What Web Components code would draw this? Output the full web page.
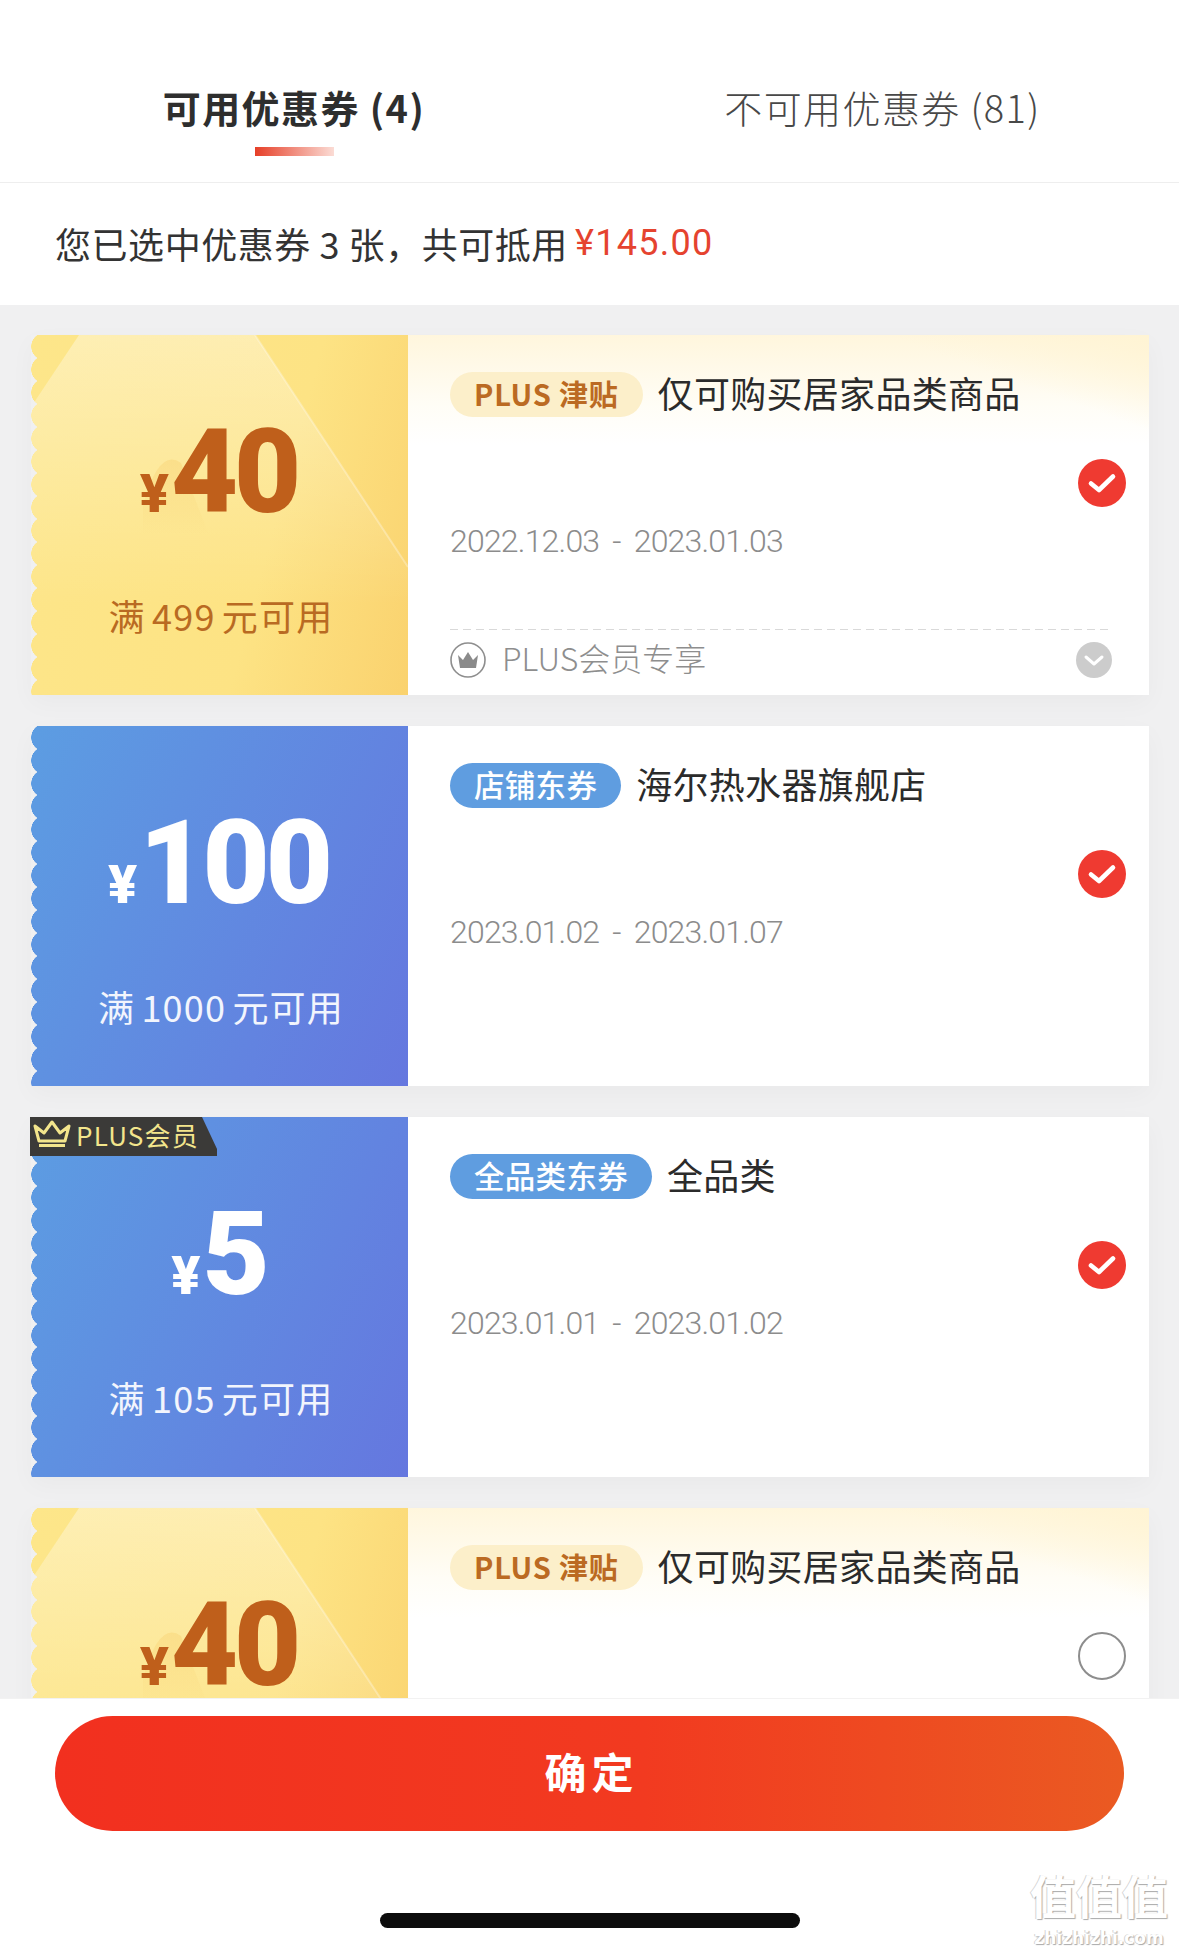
<!DOCTYPE html>
<html lang="zh">
<head>
<meta charset="utf-8">
<title>优惠券</title>
<style>
  html, body { margin: 0; padding: 0; background: #fff; }
  body { font-family: "Noto Sans CJK SC", "Noto Sans", sans-serif; overflow: hidden; }
</style>
</head>
<body>
<coupon-page>
  <coupon-tabs slot="head" active="可用优惠券 (4)" other="不可用优惠券 (81)"></coupon-tabs>
  <coupon-summary slot="head" price="¥145.00">您已选中优惠券 3 张&#xFF0C;共可抵用</coupon-summary>

  <coupon-card theme="gold" amount="40" rule="满 499 元可用" tag="PLUS 津贴" date="2022.12.03 - 2023.01.03" checked foot="PLUS会员专享">仅可购买居家品类商品</coupon-card>
  <coupon-card theme="blue" amount="100" rule="满 1000 元可用" tag="店铺东券" date="2023.01.02 - 2023.01.07" checked>海尔热水器旗舰店</coupon-card>
  <coupon-card theme="blue" amount="5" rule="满 105 元可用" tag="全品类东券" date="2023.01.01 - 2023.01.02" checked plus>全品类</coupon-card>
  <coupon-card theme="gold" amount="40" rule="满 499 元可用" tag="PLUS 津贴" date="2022.12.03 - 2023.01.03" foot="PLUS会员专享">仅可购买居家品类商品</coupon-card>

  <coupon-footer slot="foot">确定</coupon-footer>
</coupon-page>

<script>
class CouponPage extends HTMLElement {
  constructor() {
    super();
    this.attachShadow({ mode: "open" }).innerHTML = `
      <style>
        :host { display: flex; flex-direction: column; width: 1179px; height: 1952px; background: #fff; position: relative; overflow: hidden; }
        .list { flex: 1; min-height: 0; overflow: hidden; background: #f0f0f1; padding: 30px 30px 0 31px; display: flex; flex-direction: column; gap: 31px; }
      </style>
      <slot name="head"></slot>
      <div class="list"><slot></slot></div>
      <slot name="foot"></slot>
    `;
  }
}

class CouponTabs extends HTMLElement {
  connectedCallback() {
    this.attachShadow({ mode: "open" }).innerHTML = `
      <style>
        :host { display: grid; grid-template-columns: 590px 589px; height: 182px; border-bottom: 1px solid #eeeeee; color: #333; }
        .tab { display: flex; flex-direction: column; align-items: center; padding-top: 81px; font-size: 38px; line-height: 52px; letter-spacing: 1.4px; white-space: nowrap; }
        .on { font-weight: 700; color: #2e2e2e; transform: translateX(-1px); }
        .off { color: #484848; font-weight: 300; transform: translateX(-2px); }
        .bar { width: 79px; height: 9px; margin-top: 14px; background: linear-gradient(90deg, #e63f28, #fbdcd5); }
      </style>
      <div class="tab on"><span>${this.getAttribute("active")}</span><div class="bar"></div></div>
      <div class="tab off"><span>${this.getAttribute("other")}</span></div>
    `;
  }
}

class CouponSummary extends HTMLElement {
  connectedCallback() {
    this.attachShadow({ mode: "open" }).innerHTML = `
      <style>
        :host { display: flex; align-items: center; gap: 7px; height: 122px; padding: 0 0 2px 55px; box-sizing: border-box; font-size: 36px; letter-spacing: .55px; color: #333; background: #fff; }
        .price { color: #e5432f; font-family: Roboto, sans-serif; letter-spacing: 1.3px; }
      </style>
      <span><slot></slot></span><span class="price">${this.getAttribute("price")}</span>
    `;
  }
}

class CouponCard extends HTMLElement {
  connectedCallback() {
    const gold = this.getAttribute("theme") === "gold";
    const foot = this.getAttribute("foot");

    // the light wedge and the faint peak behind the amount on gold tickets
    const rays = gold ? `
      <svg class="rays" viewBox="0 0 377 360" preserveAspectRatio="none">
        <defs>
          <linearGradient id="g" x1="0" y1="0" x2="0" y2="1">
            <stop offset="0" stop-color="#fff" stop-opacity=".36"/>
            <stop offset=".75" stop-color="#fff" stop-opacity="0"/>
          </linearGradient>
          <linearGradient id="p" x1="0" y1="0" x2="0" y2="1">
            <stop offset="0" stop-color="#f7cf6e" stop-opacity=".4"/>
            <stop offset="1" stop-color="#f7cf6e" stop-opacity="0"/>
          </linearGradient>
        </defs>
        <polygon points="48,0 224,0 377,232 377,360 0,360 0,72" fill="url(#g)"/>
        <path d="M224 0 L377 232" stroke="#fff" stroke-opacity=".3" stroke-width="2" fill="none"/>
        <path d="M112 170 Q128 112 150 128 L178 200 L112 200 Z" fill="url(#p)"/>
      </svg>` : "";

    const plus = this.hasAttribute("plus") ? `
      <div class="plus">
        <svg width="38" height="28" viewBox="0 0 38 28" fill="none" stroke="#f3e58c" stroke-width="3" stroke-linejoin="round">
          <path d="M2 6 L11 13 L19 2 L27 13 L36 6 L32 21 H6 Z"/><path d="M6 25.5 H32"/>
        </svg>
        <span>PLUS会员</span>
      </div>` : "";

    const footer = foot ? `
      <div class="foot">
        <svg width="36" height="36" viewBox="0 0 36 36">
          <circle cx="18" cy="18" r="17" fill="none" stroke="#8e8e8e" stroke-width="1.6"/>
          <path d="M8 13 L13 18 L18 10 L23 18 L28 13 L26 26 H10 Z" fill="#8a8a8a"/>
        </svg>
        <span>${foot}</span>
        <svg class="more" width="36" height="36" viewBox="0 0 36 36">
          <circle cx="18" cy="18" r="18" fill="#cccccc"/>
          <path d="M10 15 L18 22 L26 15" fill="none" stroke="#fff" stroke-width="3" stroke-linecap="round" stroke-linejoin="round"/>
        </svg>
      </div>` : "";

    const check = this.hasAttribute("checked") ? `
      <svg class="check" width="48" height="48" viewBox="0 0 48 48">
        <circle cx="24" cy="24" r="24" fill="#ef3a31"/>
        <path d="M13 24.5 L21 31 L35 17.5" fill="none" stroke="#fff" stroke-width="4.6" stroke-linecap="round" stroke-linejoin="round"/>
      </svg>` : `<div class="check empty"></div>`;

    this.attachShadow({ mode: "open" }).innerHTML = `
      <style>
        :host { display: grid; grid-template-columns: 377px 1fr; flex: none; height: 360px; box-shadow: 0 8px 24px rgba(0, 0, 0, .03); }
        .left { position: relative; display: flex; flex-direction: column; align-items: center; }
        .paper { position: absolute; inset: 0; overflow: hidden;
          -webkit-mask: linear-gradient(#000, #000) 6px 0 / 100% 100% no-repeat, radial-gradient(circle at 14px 11.5px, #000 13.5px, transparent 14px) 0 0 / 28px 23px repeat-y;
          mask: linear-gradient(#000, #000) 6px 0 / 100% 100% no-repeat, radial-gradient(circle at 14px 11.5px, #000 13.5px, transparent 14px) 0 0 / 28px 23px repeat-y; }
        .gold .left { color: #b96a22; }
        .gold .paper { background: linear-gradient(105deg, #fde68a 0%, #fde384 62%, #fad26e 100%); }
        .blue .left { color: #fff; }
        .blue .paper { background: linear-gradient(115deg, #5c9de2 0%, #6577df 100%); }
        .rays { position: absolute; left: 0; top: 0; width: 100%; height: 100%; }
        .amount { position: relative; display: flex; align-items: baseline; margin: 69px 0 0 -2px; height: 136px; font-family: Roboto, sans-serif; font-weight: 900; line-height: 136px; }
        .amount b { font-size: 116px; font-weight: 900; letter-spacing: -4px; }
        .gold .amount b { color: #bf5f1b; }
        .amount i { font-style: normal; font-size: 54px; margin-right: 2px; }
        .gold .amount i { color: #bf5f1b; }
        .rule { position: relative; margin: 51px 0 0 3px; font-size: 36px; letter-spacing: 1.2px; word-spacing: -3px; line-height: 48px; white-space: nowrap; }
        .blue .rule { color: #f2f5fd; }
        .plus { position: absolute; z-index: 2; left: -1px; top: 0; width: 187px; height: 39px; box-sizing: border-box; padding: 0 0 5px 3px; display: flex; align-items: center; gap: 5px; background: #3b3a38; color: #f3e58c; font-size: 26px; letter-spacing: 1.2px; clip-path: polygon(0 0, 172px 0, 187px 32px, 187px 39px, 0 39px); }
        .right { display: grid; grid-template-columns: 1fr 48px; grid-template-rows: 45px auto 1fr; padding: 37px 23px 0 42px; min-width: 0; background: #fff; }
        .gold .right { background: linear-gradient(200deg, #fff4d4 0, rgba(255, 247, 225, 0) 90px), linear-gradient(180deg, #fff6dd 0, #fffdf6 70px, #fff 110px); }
        .title { display: flex; align-items: center; gap: 15px; white-space: nowrap; font-size: 36px; letter-spacing: .3px; color: #2b2b2b; }
        .title .name { margin-top: -6px; }
        .tag { height: 45px; line-height: 42px; padding: 0 24px; border-radius: 23px; font-size: 30.5px; font-weight: 500; }
        .gold .tag { background: #fcefca; color: #bb6a22; font-size: 29px; font-weight: 700; letter-spacing: .8px; }
        .blue .tag { background: #5f9de0; color: #fff; }
        .check { grid-column: 2; grid-row: 1 / span 3; margin-top: 87px; }
        .empty { width: 48px; height: 48px; box-sizing: border-box; border: 2px solid #8d8d8d; border-radius: 50%; }
        .date { grid-column: 1; grid-row: 2; margin-top: 102px; font-family: Roboto, sans-serif; font-weight: 300; font-size: 32px; line-height: 44px; letter-spacing: -0.8px; word-spacing: 6px; color: #8c8c8c; white-space: nowrap; }
        .foot { grid-column: 1 / span 2; grid-row: 3; align-self: end; margin: 0 14px 17px 0; padding-top: 13px; line-height: 36px; background: linear-gradient(90deg, #d9d9d9 8px, transparent 8px) 0 0 / 13px 1px repeat-x; display: flex; align-items: center; gap: 16px; font-size: 32px; color: #8e8e8e; font-weight: 300; }
        .foot span { margin-top: -7px; }
        .more { margin-left: auto; }
      </style>
      <div class="${gold ? "gold" : "blue"}" style="display:contents">
        <div class="left">
          <div class="paper">${rays}</div>
          <div class="amount"><i>¥</i><b>${this.getAttribute("amount")}</b></div>
          <div class="rule">${this.getAttribute("rule")}</div>
          ${plus}
        </div>
        <div class="right">
          <div class="title"><span class="tag">${this.getAttribute("tag")}</span><span class="name"><slot></slot></span></div>
          ${check}
          <div class="date">${this.getAttribute("date")}</div>
          ${footer}
        </div>
      </div>
    `;
  }
}

class CouponFooter extends HTMLElement {
  constructor() {
    super();
    this.attachShadow({ mode: "open" }).innerHTML = `
      <style>
        :host { display: block; height: 254px; box-sizing: border-box; position: relative; background: #fff; border-top: 1px solid #f2f2f2; padding: 17px 55px 0; }
        .btn { height: 115px; box-sizing: border-box; padding: 0 0 6px 4px; border-radius: 58px; display: flex; align-items: center; justify-content: center; background: linear-gradient(90deg, #f2301f 0%, #f23a20 55%, #ea5a22 100%); color: #fff; font-size: 42px; font-weight: 700; letter-spacing: 5px; }
        .home { width: 420px; height: 15px; margin: 82px auto 0; border-radius: 8px; background: #0c0c0c; }
        .mark { position: absolute; right: 9px; bottom: 4px; width: 142px; text-align: center; color: #fff; text-shadow: 1px 1px 1px #a9a9a9, -1px 0 0 #d5d5d5; white-space: nowrap; }
        .mark b { display: block; height: 52px; margin-bottom: 8px; font-size: 46px; line-height: 52px; font-weight: 700; }
        .mark span { display: block; height: 20px; font-family: "DejaVu Sans", sans-serif; font-size: 17px; line-height: 20px; font-weight: 700; }
      </style>
      <div class="btn"><slot></slot></div>
      <div class="home"></div>
      <div class="mark"><b>值值值</b><span>zhizhizhi.com</span></div>
    `;
  }
}

customElements.define("coupon-page", CouponPage);
customElements.define("coupon-tabs", CouponTabs);
customElements.define("coupon-summary", CouponSummary);
customElements.define("coupon-card", CouponCard);
customElements.define("coupon-footer", CouponFooter);
</script>
</body>
</html>
